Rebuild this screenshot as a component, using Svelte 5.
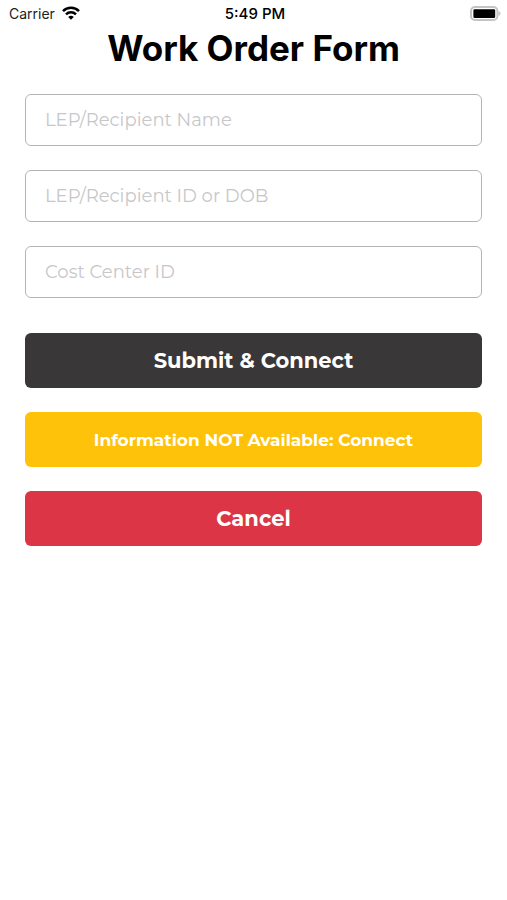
<script lang="ts">
  const fields = [
    { id: "recipient-name", label: "LEP/Recipient Name" },
    { id: "recipient-id", label: "LEP/Recipient ID or DOB" },
    { id: "cost-center", label: "Cost Center ID" },
  ];

  let values: Record<string, string> = $state({});
</script>

<div class="screen">
  <header class="status-bar">
    <div class="carrier">
      <span>Carrier</span>
      <svg class="wifi" viewBox="0 0 18 14" aria-hidden="true">
        <path d="M1 5.1a11.3 11.3 0 0 1 16 0" />
        <path d="M4 8.3a7.2 7.2 0 0 1 10 0" />
        <path class="tip" d="M9 13.8 6.2 11a4 4 0 0 1 5.6 0Z" />
      </svg>
    </div>
    <time>5:49 PM</time>
    <svg class="battery" viewBox="0 0 31 15" aria-hidden="true">
      <rect class="shell" x="1" y="1" width="26.4" height="13" rx="4" />
      <rect x="3.4" y="3.2" width="21.8" height="8.8" rx="1.2" />
      <path class="cap" d="M28.4 5c2.8.8 2.8 4.2 0 5Z" />
    </svg>
  </header>

  <h1>Work Order Form</h1>

  <form onsubmit={(e) => e.preventDefault()}>
    <div class="fields">
      {#each fields as field (field.id)}
        <input
          id={field.id}
          type="text"
          aria-label={field.label}
          placeholder={field.label}
          bind:value={values[field.id]}
        />
      {/each}
    </div>

    <div class="actions">
      <button type="submit" class="submit">Submit &amp; Connect</button>
      <button type="button" class="skip">Information NOT Available: Connect</button>
      <button type="button" class="cancel">Cancel</button>
    </div>
  </form>
</div>

<style>
  :global(body) { margin: 0; background: #fff; }

  .screen {
    min-height: 100vh;
    background: #fff;
    color: #000;
    font-family: Inter, sans-serif;
  }

  .status-bar {
    display: grid;
    grid-template-columns: 1fr auto 1fr;
    align-items: center;
    height: 26px;
    padding: 0 6px 0 9px;
    font-size: 14px;
  }
  .status-bar time { font-size: 15px; font-weight: 500; }

  .carrier { display: flex; align-items: center; gap: 7px; color: #222; }
  .wifi { width: 18px; height: 14px; fill: none; stroke: #000; stroke-width: 2.5; }
  .wifi .tip { fill: #000; stroke: none; }

  .battery { width: 31px; height: 15px; justify-self: end; }
  .battery .shell { fill: #fff; stroke: #c4c4c4; stroke-width: 2; }
  .battery .cap { fill: #c4c4c4; }

  h1 {
    margin: 0;
    font-size: 35px;
    font-weight: 700;
    line-height: 44px;
    text-align: center;
  }

  form { padding: 24px 25px; }

  .fields, .actions { display: flex; flex-direction: column; gap: 24px; }
  .actions { margin-top: 35px; }

  input {
    box-sizing: border-box;
    width: 100%;
    height: 52px;
    padding: 0 19px;
    border: 1px solid #b4b4b4;
    border-radius: 6px;
    background: #fff;
    color: #3a3738;
    font-family: Montserrat, Inter, sans-serif;
    font-size: 18px;
  }
  input::placeholder { color: #c7c7c9; opacity: 1; }

  button {
    height: 55px;
    padding: 0 16px;
    border: none;
    border-radius: 6px;
    color: #fff;
    font-family: Montserrat, Inter, sans-serif;
    font-size: 21px;
    font-weight: 700;
    cursor: pointer;
  }
  .submit { background: #3a3738; }
  .skip { background: #ffc20a; font-size: 17px; }
  .cancel { background: #dc3545; }
</style>
